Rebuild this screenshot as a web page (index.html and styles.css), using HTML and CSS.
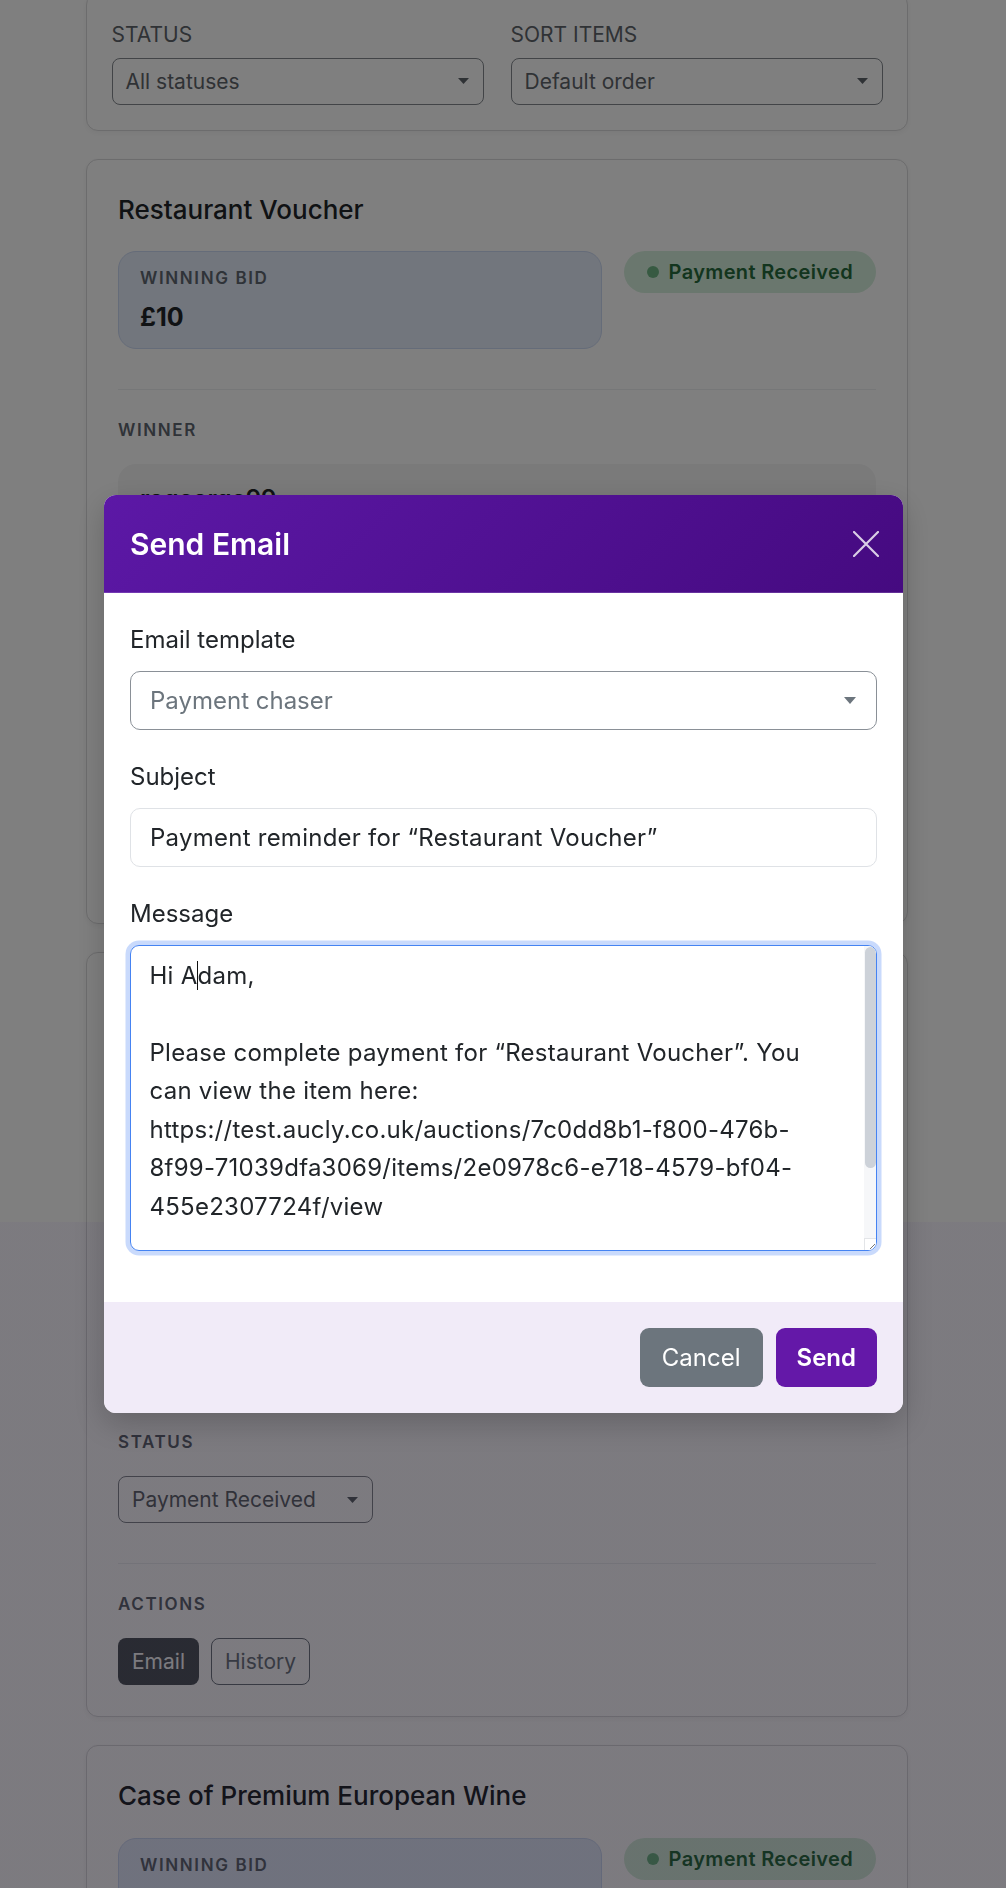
FILE: index.html
```html
<!DOCTYPE html>
<html lang="en">
<head>
  <meta charset="UTF-8">
  <meta name="viewport" content="width=device-width, initial-scale=1.0">
  <title>Auction items - Send Email</title>
  <link rel="stylesheet" href="styles.css">
</head>
<body class="modal-open">
  <main class="page">
    <section class="card filters">
      <div class="filter-grid">
        <div>
          <div class="filter-label">STATUS</div>
          <div class="select select-sm">All statuses
            <svg class="caret" width="11" height="6" viewBox="0 0 11 6"><path d="M0 0h11L5.5 6z"/></svg>
          </div>
        </div>
        <div>
          <div class="filter-label">SORT ITEMS</div>
          <div class="select select-sm">Default order
            <svg class="caret" width="11" height="6" viewBox="0 0 11 6"><path d="M0 0h11L5.5 6z"/></svg>
          </div>
        </div>
      </div>
    </section>

    <article class="card item">
      <h2 class="item-title">Restaurant Voucher</h2>
      <div class="item-top">
        <div class="bid-box">
          <div class="eyebrow">Winning bid</div>
          <div class="bid-amount">£10</div>
        </div>
        <span class="badge-paid"><span class="dot"></span>Payment Received</span>
      </div>
      <div class="item-section">
        <div class="eyebrow">Winner</div>
        <div class="winner-box">
          <div class="winner-name">rogeorge99</div>
          <div class="winner-email">adam.george@example.com</div>
        </div>
      </div>
      <div class="item-section">
        <div class="eyebrow">Status</div>
        <div class="select select-sm status-select">Payment Received
          <svg class="caret" width="11" height="6" viewBox="0 0 11 6"><path d="M0 0h11L5.5 6z"/></svg>
        </div>
      </div>
      <div class="item-section">
        <div class="eyebrow">Actions</div>
        <div class="actions">
          <button class="btn btn-sm btn-dark">Email</button>
          <button class="btn btn-sm btn-outline">History</button>
        </div>
      </div>
    </article>

    <article class="card item">
      <h2 class="item-title">Weekend Spa Break for Two</h2>
      <div class="item-top">
        <div class="bid-box">
          <div class="eyebrow">Winning bid</div>
          <div class="bid-amount">£120</div>
        </div>
        <span class="badge-paid"><span class="dot"></span>Payment Received</span>
      </div>
      <div class="item-section">
        <div class="eyebrow">Winner</div>
        <div class="winner-box">
          <div class="winner-name">jsmith_84</div>
          <div class="winner-email">jane.smith@example.com</div>
        </div>
      </div>
      <div class="item-section">
        <div class="eyebrow">Status</div>
        <div class="select select-sm status-select">Payment Received
          <svg class="caret" width="11" height="6" viewBox="0 0 11 6"><path d="M0 0h11L5.5 6z"/></svg>
        </div>
      </div>
      <div class="item-section">
        <div class="eyebrow">Actions</div>
        <div class="actions">
          <button class="btn btn-sm btn-dark">Email</button>
          <button class="btn btn-sm btn-outline">History</button>
        </div>
      </div>
    </article>

    <article class="card item">
      <h2 class="item-title">Case of Premium European Wine</h2>
      <div class="item-top">
        <div class="bid-box">
          <div class="eyebrow">Winning bid</div>
          <div class="bid-amount">£85</div>
        </div>
        <span class="badge-paid"><span class="dot"></span>Payment Received</span>
      </div>
      <div class="item-section">
        <div class="eyebrow">Winner</div>
        <div class="winner-box">
          <div class="winner-name">mbrown12</div>
          <div class="winner-email">mark.brown@example.com</div>
        </div>
      </div>
    </article>
  </main>

  <!-- modal open: Send Email -->
  <div class="backdrop"></div>
  <div class="modal-wrap">
    <div class="modal">
      <div class="modal-header">
        <h3 class="modal-title">Send Email</h3>
        <button class="btn-close" aria-label="Close">
          <svg width="26" height="26" viewBox="0 0 26 26"><path d="M1 1L25 25M25 1L1 25" stroke="currentColor" stroke-width="2.2" stroke-linecap="round"/></svg>
        </button>
      </div>
      <div class="modal-body">
        <div class="field">
          <label class="form-label">Email template</label>
          <div class="form-select">Payment chaser
            <svg class="caret" width="12" height="7" viewBox="0 0 12 7"><path d="M0 0h12L6 7z"/></svg>
          </div>
        </div>
        <div class="field">
          <label class="form-label">Subject</label>
          <div class="form-input">Payment reminder for “Restaurant Voucher”</div>
        </div>
        <div class="field">
          <label class="form-label">Message</label>
          <div class="msg-box">
            <div class="msg-text">
              <div>Hi A<span class="text-cursor"></span>dam,</div>
              <div>&nbsp;</div>
              <div>Please complete payment for “Restaurant Voucher”. You</div>
              <div>can view the item here:</div>
              <div>https://test.aucly.co.uk/auctions/7c0dd8b1-f800-476b-</div>
              <div>8f99-71039dfa3069/items/2e0978c6-e718-4579-bf04-</div>
              <div>455e2307724f/view</div>
            </div>
            <div class="msg-scroll">
              <div class="thumb"></div>
              <div class="track"></div>
              <div class="resizer">
                <svg width="12" height="12" viewBox="0 0 12 12"><path d="M10 5L5 10M10 8L8 10" stroke="#777" stroke-width="1"/></svg>
              </div>
            </div>
          </div>
        </div>
      </div>
      <div class="modal-footer">
        <button class="btn btn-lg btn-secondary">Cancel</button>
        <button class="btn btn-lg btn-send">Send</button>
      </div>
    </div>
  </div>
</body>
</html>
```

FILE: styles.css
```css
* { box-sizing: border-box; }
html, body { margin: 0; }
body {
  font-family: Inter, "Liberation Sans", Arial, sans-serif;
  color: #212529;
  background: #fff;
  height: 100vh;
}
body.modal-open { overflow: hidden; }

.page {
  width: 822px;
  margin: -7px 0 0 86px;
}

/* cards */
.card {
  background: #fff;
  border: 1px solid #d9d9db;
  border-radius: 12px;
  box-shadow: 0 2px 6px rgba(0,0,0,0.05);
  margin-bottom: 28px;
}
.filters { padding: 25px 24.5px; }
.filter-grid {
  display: grid;
  grid-template-columns: 1fr 1fr;
  gap: 27px;
}
.filter-label {
  font-size: 21px;
  line-height: 31.5px;
  color: #5f656b;
  margin-bottom: 7px;
}

.select {
  display: flex;
  align-items: center;
  justify-content: space-between;
  background: #fff;
  border: 1px solid #84898f;
  border-radius: 8px;
}
.select-sm {
  height: 47px;
  padding: 0 14px 0 13px;
  font-size: 21px;
  color: #5f656b;
}
.caret { fill: currentColor; flex-shrink: 0; }

.item { padding: 34px 31px 31px; }
.item-title {
  margin: 0 0 26.6px;
  font-size: 26px;
  font-weight: 500;
  line-height: 1.2;
  color: #212529;
}
.item-top {
  display: flex;
  justify-content: space-between;
  align-items: flex-start;
}
.bid-box {
  width: 484px;
  background: #e4ecfa;
  border: 1px solid #cbd8f2;
  border-radius: 18px;
  padding: 14px 21px 16px;
}
.eyebrow {
  font-size: 17px;
  line-height: 24px;
  font-weight: 600;
  letter-spacing: 0.095em;
  text-transform: uppercase;
  color: #5f6670;
}
.bid-amount {
  margin-top: 12px;
  font-size: 25px;
  line-height: 30px;
  font-weight: 700;
}
.badge-paid {
  display: inline-flex;
  align-items: center;
  gap: 10px;
  padding: 9px 23px;
  border-radius: 999px;
  background: #d5efdc;
  color: #276b3c;
  font-size: 20px;
  line-height: 24px;
  font-weight: 600;
  letter-spacing: 0.35px;
}
.badge-paid .dot {
  width: 12px;
  height: 12px;
  border-radius: 50%;
  background: #6fb585;
}

.item-section {
  margin-top: 40px;
  padding-top: 28px;
  border-top: 1px solid #eceef0;
}
.item-section .eyebrow { margin-bottom: 22px; }
.winner-box {
  height: 103.3px;
  background: #f4f4f5;
  border-radius: 18px;
  padding: 19px 22px 20px;
}
.winner-name { font-size: 24px; line-height: 32px; font-weight: 600; }
.winner-email { font-size: 20px; line-height: 32px; color: #6c757d; }
.status-select { width: 255px; }
.actions { display: flex; gap: 12px; }

.btn {
  font-family: inherit;
  border: 1px solid transparent;
  cursor: pointer;
}
.btn-sm {
  height: 47.4px;
  padding: 0 13px;
  font-size: 21px;
  border-radius: 8px;
}
.btn-dark { background: #4f565d; color: #fff; }
.btn-outline { background: #fff; border-color: #6c757d; color: #6c757d; }

/* modal */
.backdrop {
  position: fixed;
  inset: 0;
  background: linear-gradient(to bottom, rgba(0,0,0,0.5) 1222px, rgba(8,5,14,0.53) 1222px);
}
.modal-wrap {
  position: fixed;
  inset: 0;
  display: flex;
  justify-content: center;
  align-items: flex-start;
  padding-top: 495px;
}
.modal {
  width: 799px;
  background: #fff;
  border-radius: 12px;
  overflow: hidden;
  box-shadow: 0 10px 30px rgba(0,0,0,0.2);
}
.modal-header {
  height: 98px;
  display: flex;
  align-items: center;
  justify-content: space-between;
  padding: 0 24px 0 26.5px;
  background: linear-gradient(135deg, #5c18a6 0%, #450a80 100%);
  border-bottom: 1px solid rgba(255,255,255,0.15);
}
.modal-title {
  margin: 0;
  color: #fff;
  font-size: 30px;
  font-weight: 600;
  line-height: 1.2;
}
.btn-close {
  width: 26px;
  height: 26px;
  padding: 0;
  border: 0;
  background: none;
  color: rgba(255,255,255,0.8);
}
.btn-close svg { display: block; }

.modal-body { padding: 29.4px 25.5px 51px 26.5px; }
.field + .field { margin-top: 29px; }
.form-label {
  display: block;
  font-size: 24px;
  line-height: 36px;
  margin-bottom: 13px;
}
.form-select {
  height: 59px;
  display: flex;
  align-items: center;
  justify-content: space-between;
  padding: 0 20px 0 19px;
  border: 1.5px solid #8a9097;
  border-radius: 10px;
  font-size: 24px;
  color: #6c757d;
}
.form-input {
  height: 59px;
  display: flex;
  align-items: center;
  padding: 0 19px;
  border: 1.5px solid #dfe2e6;
  border-radius: 10px;
  font-size: 24px;
  letter-spacing: 0.25px;
}

.msg-box {
  height: 306px;
  display: flex;
  border: 1.5px solid #4583f2;
  border-radius: 9px;
  box-shadow: 0 0 0 4.5px #c9dafc;
  overflow: hidden;
}
.msg-text {
  flex: 1;
  padding: 10.5px 0 0 18.5px;
  font-size: 24px;
  line-height: 38.5px;
  letter-spacing: 0.25px;
  white-space: nowrap;
  overflow: hidden;
}
.text-cursor {
  display: inline-block;
  width: 1.5px;
  height: 29px;
  margin: 0 -0.75px;
  background: #111;
  vertical-align: -6px;
}
.msg-scroll {
  width: 12px;
  display: flex;
  flex-direction: column;
  background: #f6f7f9;
}
.thumb {
  height: 221px;
  margin: 1px 0.5px 0;
  border-radius: 6px;
  background: #cdd2d9;
}
.track { flex: 1; }
.resizer {
  height: 12px;
  background: #fff;
  border-top: 1px solid #e3e5e8;
  border-left: 1px solid #e3e5e8;
}
.resizer svg { display: block; }

.modal-footer {
  display: flex;
  justify-content: flex-end;
  gap: 13px;
  padding: 26px 25.5px;
  background: #f1ebf8;
}
.btn-lg {
  height: 58.7px;
  padding: 0 21px;
  font-size: 24px;
  border-radius: 9px;
  color: #fff;
}
.btn-secondary { background: #6c757d; }
.btn-send {
  background: #6418a8;
  font-weight: 600;
  padding: 0 20px;
}
```
